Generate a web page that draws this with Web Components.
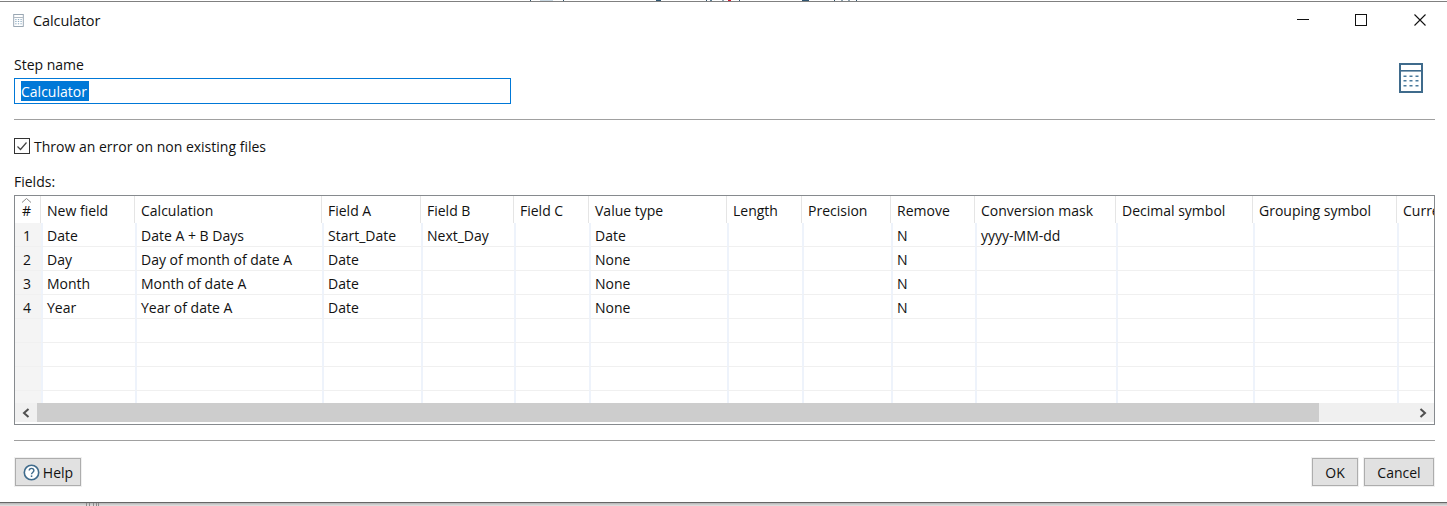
<!DOCTYPE html>
<html><head><meta charset="utf-8">
<style>
html,body{margin:0;padding:0;background:#fff;width:1447px;height:506px;overflow:hidden;font-family:"Open Sans","Noto Sans",sans-serif;font-size:14px;color:#1a1a1a}
</style></head><body>
<calc-dialog></calc-dialog>
<script>
const ICON_CALC=(w,h,sw,c)=>`<svg width="${w}" height="${h}" viewBox="0 0 24 30" style="display:block"><rect x="1" y="1" width="22" height="28" fill="#fff" stroke="${c}" stroke-width="2"/><rect x="2" y="7" width="20" height="1.6" fill="${c}"/><g fill="#4a7a9c"><rect x="4.5" y="12.5" width="3" height="1.5"/><rect x="10.5" y="12.5" width="3" height="1.5"/><rect x="16.5" y="12.5" width="3" height="1.5"/><rect x="4.5" y="17" width="3" height="1.5"/><rect x="10.5" y="17" width="3" height="1.5"/><rect x="16.5" y="17" width="3" height="1.5"/><rect x="4.5" y="22" width="3" height="1.5"/><rect x="10.5" y="22" width="3" height="1.5"/><rect x="16.5" y="22" width="3" height="1.5"/></g></svg>`;

class TitleBar extends HTMLElement{constructor(){super();this.attachShadow({mode:'open'}).innerHTML=`<style>
:host{display:flex;flex:none;align-items:center;height:37px;padding-left:13px;box-sizing:border-box}
.t{margin-left:9px;font-size:14.5px;color:#111;letter-spacing:-.1px}
.sp{flex:1}
.b{display:flex;align-items:center;justify-content:center;width:12px;height:12px;margin-top:-2px}
svg{display:block}
.min{margin-right:46px}.max{margin-right:47px}.cl{margin-right:21px}
</style>
<span>${ICON_CALC(11,13,2,'#8b9aa8')}</span><span class="t"><slot></slot></span><span class="sp"></span>
<span class="b min"><svg width="12" height="12"><rect x="0" y="5" width="12" height="1" fill="#111"/></svg></span>
<span class="b max"><svg width="12" height="12"><rect x=".5" y=".5" width="11" height="11" fill="none" stroke="#111"/></svg></span>
<span class="b cl"><svg width="12" height="12"><path d="M.5 .5L11.5 11.5M11.5 .5L.5 11.5" stroke="#111" stroke-width="1.1"/></svg></span>`}}
customElements.define('title-bar',TitleBar);

class StepName extends HTMLElement{constructor(){super();this.attachShadow({mode:'open'}).innerHTML=`<style>
:host{display:flex;flex:none;justify-content:space-between;padding:0 24px 0 14px;height:80px;box-sizing:border-box}
.l{height:39px;box-sizing:border-box;padding-top:16px;line-height:20px;color:#111}
.i{width:497px;height:26px;box-sizing:border-box;border:1px solid #0078d7;padding:2px 6px;display:flex}
.s{background:#0078d7;color:#fff;line-height:22px;height:20px;width:68px;overflow:hidden;white-space:nowrap}
.ic{padding-top:24px}
</style><div><div class="l">Step name</div><div class="i"><span class="s">Calculator</span></div></div><div class="ic">${ICON_CALC(24,30,2,'#3f6b8c')}</div>`}}
customElements.define('step-name',StepName);

class HRule extends HTMLElement{constructor(){super();this.attachShadow({mode:'open'}).innerHTML=`<style>:host{display:block;flex:none;height:1px;margin:0 12px 0 14px;background:#a0a0a0}</style>`}}
customElements.define('h-rule',HRule);

class CheckRow extends HTMLElement{constructor(){super();this.attachShadow({mode:'open'}).innerHTML=`<style>
:host{display:flex;flex:none;align-items:center;gap:4px;padding-left:14px;height:16px;margin-top:18px}
.c{width:16px;height:16px;box-sizing:border-box;border:1px solid #333;display:block}
span{color:#111;line-height:18px;padding-top:2px}
</style><svg class="c" viewBox="0 0 14 14"><path d="M2.5 7.5L5.5 10.5L11.5 3.5" fill="none" stroke="#444" stroke-width="1.2"/></svg><span><slot></slot></span>`}}
customElements.define('check-row',CheckRow);

const COLS=[26,94,187,99,93,75,138,75,89,84,141,137,144,40];
const HEAD=['#','New field','Calculation','Field A','Field B','Field C','Value type','Length','Precision','Remove','Conversion mask','Decimal symbol','Grouping symbol','Curre'];
const ROWS=[
['1','Date','Date A + B Days','Start_Date','Next_Day','','Date','','','N','yyyy-MM-dd','','',''],
['2','Day','Day of month of date A','Date','','','None','','','N','','','',''],
['3','Month','Month of date A','Date','','','None','','','N','','','',''],
['4','Year','Year of date A','Date','','','None','','','N','','','',''],
Array(14).fill(''),Array(14).fill(''),Array(14).fill(''),Array(14).fill('')];
class DataGrid extends HTMLElement{constructor(){super();
const cell=(t,i)=>`<div class="c ${i==0?'n':''}">${t}</div>`;
const tpl=COLS.map(c=>c+'px').join(' ');
this.attachShadow({mode:'open'}).innerHTML=`<style>
:host{display:flex;flex:none;flex-direction:column;height:230px;margin:0 12px 0 14px;border:1px solid #868a8e;box-sizing:border-box;overflow:hidden}
.v{flex:1;overflow:hidden;min-height:0}
.r{display:grid;grid-template-columns:${tpl};height:24px;width:${COLS.reduce((a,b)=>a+b,0)}px}
.r.h{height:27px}
.c{box-sizing:border-box;padding-left:4px;white-space:nowrap;overflow:hidden;line-height:25px;border-left:2px solid #eef3fb;border-bottom:1px solid #f0f0f0;color:#111}
.h .c{border-left:0;padding-left:6px;border-right:1px solid #e5e5e5;border-bottom:0;line-height:30px;height:27px}
.c.n{background:#f4f4f4;text-align:center;padding:0 2px 0 0;border-left:0}
.h .c.n{background:#fff;position:relative;padding:0 2px 0 0}
.n svg{position:absolute;left:6px;top:2px}
.sb{height:19px;margin-bottom:2px;flex:none;background:#f0f0f0;display:flex;align-items:stretch}
.a{width:22px;display:flex;align-items:center;justify-content:center}
.th{width:1282px;background:#cdcdcd}.tr{flex:1}
</style><div class="v">
<div class="r h">${HEAD.map((t,i)=>i==0?`<div class="c n"><svg width="11" height="5"><path d="M1 4.5L5.5 .5L10 4.5" fill="none" stroke="#888"/></svg>#</div>`:cell(t,i)).join('')}</div>
${ROWS.map(r=>`<div class="r">${r.map(cell).join('')}</div>`).join('')}
</div><div class="sb"><div class="a"><svg width="8" height="10"><path d="M6.5 1L2 5L6.5 9" fill="none" stroke="#505050" stroke-width="2"/></svg></div><div class="th"></div><div class="tr"></div><div class="a"><svg width="8" height="10"><path d="M1.5 1L6 5L1.5 9" fill="none" stroke="#505050" stroke-width="2"/></svg></div></div>`}}
customElements.define('data-grid',DataGrid);

class DlgButton extends HTMLElement{constructor(){super();this.attachShadow({mode:'open'}).innerHTML=`<style>
:host{display:inline-flex;align-items:center;justify-content:center;gap:3px;height:28px;box-sizing:border-box;border:1px solid #adadad;background:#e1e1e1;color:#111;outline:1px solid #f0f0f0}
</style><slot name="icon"></slot><slot></slot>`}}
customElements.define('dlg-button',DlgButton);

const mark=(x,w,c)=>`linear-gradient(${c},${c}) ${x}px 0/${w}px 100% no-repeat`;
class CalcDialog extends HTMLElement{constructor(){super();this.attachShadow({mode:'open'}).innerHTML=`<style>
:host{display:flex;flex-direction:column;height:506px;box-sizing:border-box}
.top{height:2px;flex:none;background:linear-gradient(#0000 50%,#808080 50%),${[[530,1,'#34566e'],[540,13,'#c9d8e2'],[563,1,'#34566e'],[656,5,'#2f5570'],[706,1,'#34566e'],[710,2,'#5d7f96'],[722,2,'#8fa3b0'],[728,3,'#d01830'],[739,1,'#34566e'],[802,7,'#2f5570'],[834,1,'#34566e'],[841,2,'#8fa3b0'],[848,2,'#8fa3b0'],[856,1,'#34566e']].map(m=>mark(...m)).join(',')}}
.f{flex:none;margin:19px 0 4px 14px;height:18px;line-height:18px;color:#111}
.foot{display:flex;flex:none;justify-content:space-between;padding:0 13px 0 15px;margin-top:17px}
.r{display:flex;gap:6px}
.bot{flex:none;margin-top:16px;height:3px;border-top:1px solid #666;background:${[[86,1,'#8a8a8a'],[89,1,'#8a8a8a'],[93,1,'#8a8a8a'],[96,1,'#8a8a8a'],[98,1,'#8a8a8a']].map(m=>mark(...m)).join(',')},linear-gradient(#b4b4b4,#e4e4e4)}
</style><div class="top"></div>
<title-bar>Calculator</title-bar><step-name></step-name><h-rule></h-rule>
<check-row>Throw an error on non existing files</check-row>
<div class="f">Fields:</div><data-grid></data-grid>
<h-rule style="margin-top:15px"></h-rule>
<div class="foot"><dlg-button style="width:66px"><svg slot="icon" width="17" height="17" viewBox="0 0 17 17"><circle cx="8.5" cy="8.5" r="7.2" fill="#fff" stroke="#3f6b8c" stroke-width="1.6"/><path d="M6.2 6.6c0-3 4.7-3 4.7 0c0 1.8-2.4 1.9-2.4 3.6" fill="none" stroke="#3f6b8c" stroke-width="1.4"/><rect x="7.8" y="11.4" width="1.5" height="1.6" fill="#3f6b8c"/></svg>Help</dlg-button>
<div class="r"><dlg-button style="width:46px">OK</dlg-button><dlg-button style="width:70px">Cancel</dlg-button></div></div>
<div class="bot"></div>`}}
customElements.define('calc-dialog',CalcDialog);
</script></body></html>
